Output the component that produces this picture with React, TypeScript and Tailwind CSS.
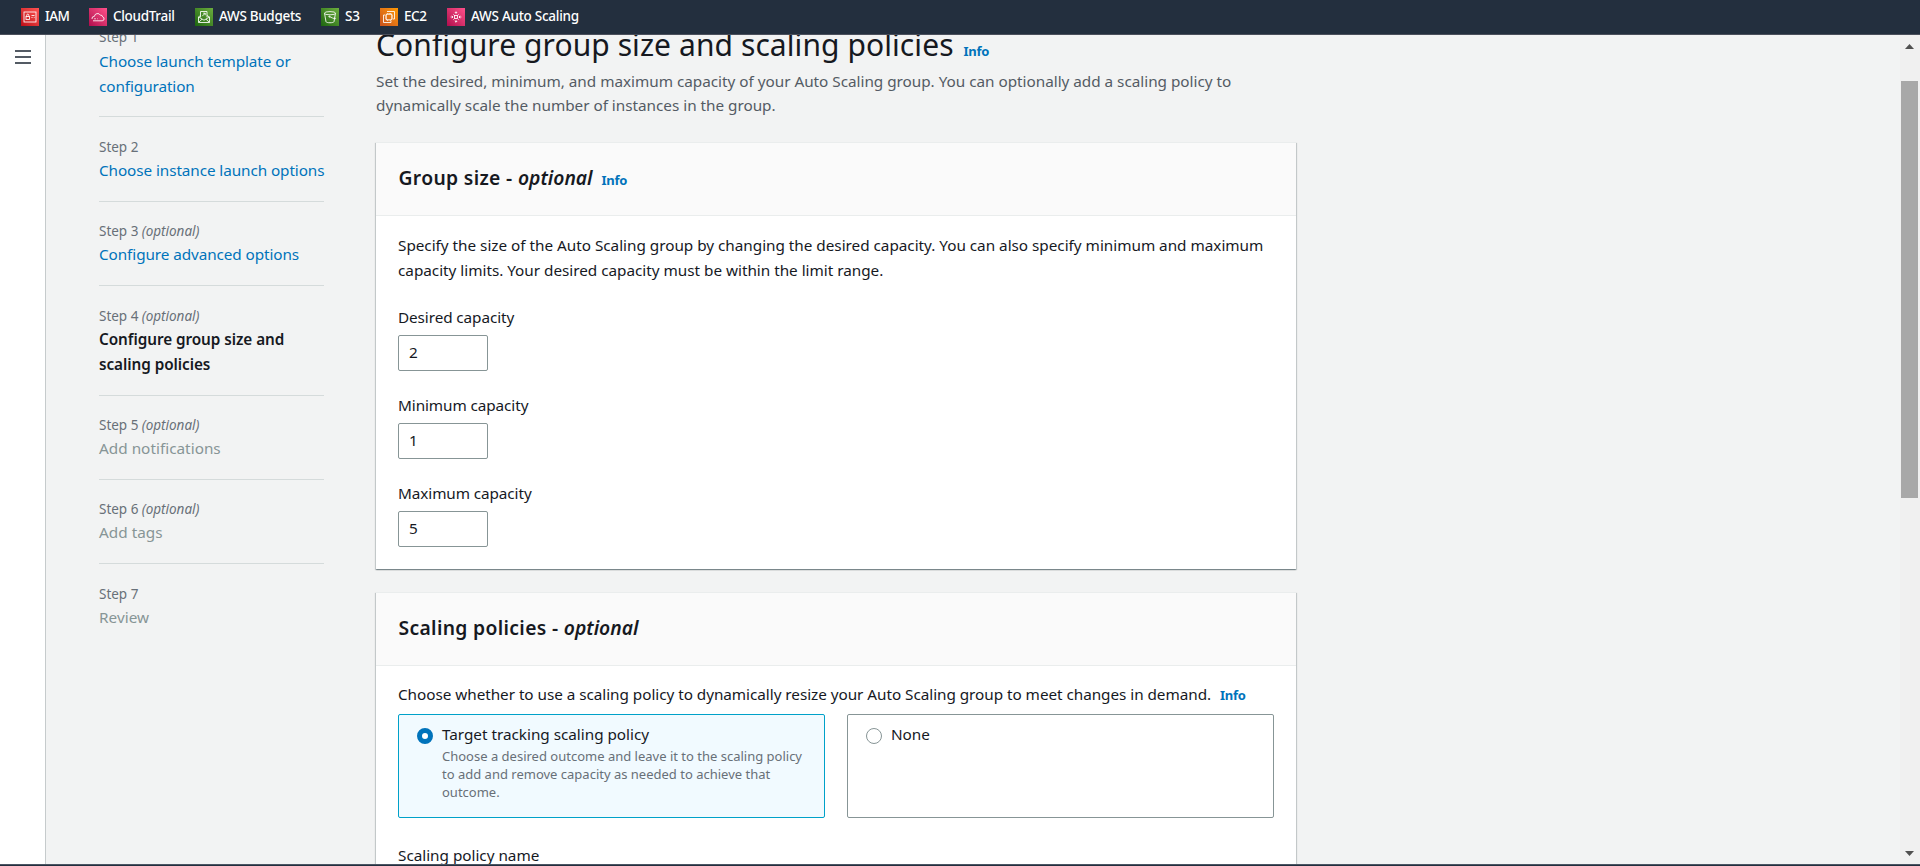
import React from 'react';

type IconName = 'iam' | 'trail' | 'budgets' | 's3' | 'ec2' | 'scaling';

const services: { icon: IconName; label: string; tile: string; box: string; text: string }[] = [
  { icon: 'iam', label: 'IAM', tile: 'from-[#bd0816] to-[#ff5252]', box: 'w-[68px]', text: 'tracking-[-0.5px]' },
  { icon: 'trail', label: 'CloudTrail', tile: 'from-[#b0084d] to-[#ff4f8b]', box: 'w-[106px]', text: 'tracking-[-0.31px]' },
  { icon: 'budgets', label: 'AWS Budgets', tile: 'from-[#1b660f] to-[#6cae3e]', box: 'w-[126px]', text: 'tracking-[-0.31px]' },
  { icon: 's3', label: 'S3', tile: 'from-[#1b660f] to-[#6cae3e]', box: 'w-[59px]', text: 'tracking-[-0.3px]' },
  { icon: 'ec2', label: 'EC2', tile: 'from-[#c8511b] to-[#ff9900]', box: 'w-[67px]', text: 'tracking-[-0.4px]' },
  { icon: 'scaling', label: 'AWS Auto Scaling', tile: 'from-[#b0084d] to-[#ff4f8b]', box: 'w-[140px]', text: 'tracking-[-0.26px]' },
];

const glyphs: Record<IconName, React.ReactNode> = {
  iam: (
    <>
      <rect x="3" y="4" width="12" height="10" />
      <rect x="5" y="8.5" width="3.5" height="3" />
      <path d="M5.7 8.5V7.2a1.05 1.05 0 0 1 2.1 0v1.3M10.5 7.5h3M10.5 9.5h1M12.8 9.5h.7" />
    </>
  ),
  trail: (
    <path d="M4 12.8h9.2a2 2 0 0 0 .5-3.9 2 2 0 0 0-2.3-1.7 3.2 3.2 0 0 0-6 1.2A2.3 2.3 0 0 0 3 11M5.2 10.8h1.6M8 10.8h.6" />
  ),
  budgets: (
    <path d="M5.5 9.3V3.5h6.5v5.8M5.5 7.5 3.5 9v5.5h11V9L12 7.5M3.5 9 9 12.2 14.5 9M3.8 14.2 7 11.2M14.2 14.2 11 11.2M7.2 8.2l3-3M8.2 5.2h2v2" />
  ),
  s3: (
    <>
      <ellipse cx="9" cy="5.2" rx="5.5" ry="1.6" />
      <path d="M3.5 5.2 5 13.7c.3 1.4 7.7 1.4 8 0l1.5-8.5M8.5 8.6c1.5.9 4.3 2 5.8 2.2.7-.2 0-.9-.6-1.3" />
      <circle cx="8.4" cy="8.6" r=".6" />
    </>
  ),
  ec2: (
    <>
      <path d="M7 3.5h7.5V11H13M5 7H3.5v7.5H11V13" />
      <rect x="6.2" y="6.2" width="5.6" height="5.6" />
      <path d="M7.7 5v1.2M9.2 5v1.2M10.7 5v1.2M7.7 11.8V13M10.3 11.8V13M5 8h1.2M5 10h1.2M11.8 8H13M11.8 10H13" />
    </>
  ),
  scaling: (
    <>
      <rect x="7.5" y="7.5" width="3" height="3" />
      <path d="M9 3.8v2M9 12.2v2M7.8 5 9 3.8 10.2 5M7.8 13 9 14.2l1.2-1.2M4.8 7.8 6 9l-1.2 1.2M13.2 7.8 12 9l1.2 1.2M3.6 9H6M12 9h2.4M6.2 6.2l.6.6M11.8 6.2l-.6.6M6.2 11.8l.6-.6M11.8 11.8l-.6-.6" />
    </>
  ),
};

function ServiceIcon({ name, tile }: { name: IconName; tile: string }) {
  return (
    <span className={`size-[18px] shrink-0 bg-linear-to-tr ${tile}`}>
      <svg viewBox="0 0 18 18" className="block size-[18px]" fill="none" stroke="#fff" strokeWidth=".85">
        {glyphs[name]}
      </svg>
    </span>
  );
}

interface Step {
  n: number;
  optional?: boolean;
  title: React.ReactNode;
  style: string;
}

const link = 'text-[#0073bb] tracking-[-0.09px]';
const pending = 'text-[#879596] tracking-[0.02px]';

const steps: Step[] = [
  { n: 1, title: <>Choose launch template or<br />configuration</>, style: link },
  { n: 2, title: 'Choose instance launch options', style: link },
  { n: 3, optional: true, title: 'Configure advanced options', style: link },
  {
    n: 4,
    optional: true,
    title: <>Configure group size and<br />scaling policies</>,
    style: 'font-semibold text-[#16191f] tracking-[-0.06px]',
  },
  { n: 5, optional: true, title: 'Add notifications', style: pending },
  { n: 6, optional: true, title: 'Add tags', style: pending },
  { n: 7, title: 'Review', style: pending },
];

function Info({ className = '' }: { className?: string }) {
  return (
    <a className={`text-[13px] font-bold tracking-[-0.3px] text-[#0073bb] ${className}`}>Info</a>
  );
}

function Card({ title, info, children }: { title: string; info?: boolean; children: React.ReactNode }) {
  return (
    <section className="border-t border-[#eaeded] bg-white shadow-[0_1px_1px_0_rgba(0,28,36,0.3),1px_1px_1px_0_rgba(0,28,36,0.15),-1px_1px_1px_0_rgba(0,28,36,0.15)]">
      <header className="h-[73px] border-b border-[#eaeded] bg-[#fafafa] px-[22.5px] pt-[21px]">
        <h2 className="text-[19.3px] leading-7 font-semibold tracking-[0.34px] text-[#16191f]">
          {title} - <i className="tracking-normal">optional</i>
          {info && <Info className="ml-[9px]" />}
        </h2>
      </header>
      <div className="px-[22px] pt-[17px]">{children}</div>
    </section>
  );
}

function Field({ label, value }: { label: string; value: string }) {
  return (
    <div className="mt-[22px]">
      <label className="block leading-6 tracking-[-0.09px]">{label}</label>
      <div className="mt-[6px] h-9 w-[90px] rounded-[2px] border border-[#879596] bg-white pl-[10px] leading-[33px]">
        {value}
      </div>
    </div>
  );
}

function Tile({ label, description, checked }: { label: string; description?: React.ReactNode; checked?: boolean }) {
  return (
    <div
      className={`flex h-[104px] w-[427px] gap-[9px] rounded-[2px] border pt-[7px] pl-[18px] ${
        checked ? 'border-[#00a1c9] bg-[#f1faff]' : 'border-[#879596] bg-white'
      }`}
    >
      <span
        className={`mt-[6px] size-4 shrink-0 rounded-full bg-white ${
          checked ? 'border-[5px] border-[#0073bb]' : 'border border-[#879596]'
        }`}
      />
      <div>
        <div className="leading-6">{label}</div>
        {description && <p className="mt-px text-[13px] leading-[18px] tracking-normal text-[#687078]">{description}</p>}
      </div>
    </div>
  );
}

export default function App() {
  return (
    <div className="flex h-[866px] w-full flex-col overflow-hidden bg-[#f2f3f3] font-['Noto_Sans','Open_Sans',sans-serif] text-[15.3px] tracking-[-0.02px] whitespace-nowrap text-[#16191f]">
      <nav className="flex h-[35px] shrink-0 border-b border-[#4b505c] bg-[#232f3e] pt-2 pl-[21px] text-[13.5px] leading-[17px] font-medium text-white">
        {services.map((s) => (
          <a key={s.label} className={`flex gap-[6px] ${s.box}`}>
            <ServiceIcon name={s.icon} tile={s.tile} />
            <span className={s.text}>{s.label}</span>
          </a>
        ))}
      </nav>

      <div className="flex min-h-0 flex-1 overflow-hidden">
        <aside className="w-[46px] shrink-0 border-r border-[#c6cbcc] bg-white pt-[15px] pl-[15px]">
          <div className="flex flex-col gap-1">
            <span className="h-[2px] w-4 bg-[#545b64]" />
            <span className="h-[2px] w-4 bg-[#545b64]" />
            <span className="h-[2px] w-4 bg-[#545b64]" />
          </div>
        </aside>

        <ol className="-mt-[27px] ml-[53px] w-[225px] shrink-0">
          {steps.map((s) => (
            <li key={s.n} className="border-b border-[#d5dbdb] pt-[20.4px] pb-[17.8px] last:border-b-0">
              <div className="text-[13.5px] leading-[18px] text-[#687078]">
                Step {s.n} {s.optional && <i>(optional)</i>}
              </div>
              <div className={`mt-[2.2px] leading-[25px] ${s.style}`}>{s.title}</div>
            </li>
          ))}
        </ol>

        <main className="-mt-[8px] ml-[52px] w-[920px] shrink-0">
          <h1 className="flex h-9 items-baseline text-[30px] leading-9 tracking-[0.08px]">
            Configure group size and scaling policies
            <Info className="ml-[10px]" />
          </h1>
          <p className="mt-[5.5px] leading-6 text-[#545b64]">
            Set the desired, minimum, and maximum capacity of your Auto Scaling group. You can optionally add a scaling policy to
            <br />
            dynamically scale the number of instances in the group.
          </p>

          <div className="mt-[25.5px] flex flex-col gap-[23px]">
            <Card title="Group size" info>
              <p className="leading-[25px]">
                Specify the size of the Auto Scaling group by changing the desired capacity. You can also specify minimum and maximum
                <br />
                capacity limits. Your desired capacity must be within the limit range.
              </p>
              <Field label="Desired capacity" value="2" />
              <Field label="Minimum capacity" value="1" />
              <Field label="Maximum capacity" value="5" />
              <div className="h-[22px]" />
            </Card>

            <Card title="Scaling policies">
              <div className="-mt-px leading-6 tracking-[-0.045px]">
                Choose whether to use a scaling policy to dynamically resize your Auto Scaling group to meet changes in demand.
                <Info className="ml-[9px]" />
              </div>
              <div className="mt-[7px] flex gap-[22px]">
                <Tile
                  checked
                  label="Target tracking scaling policy"
                  description={
                    <>
                      Choose a desired outcome and leave it to the scaling policy
                      <br />
                      to add and remove capacity as needed to achieve that
                      <br />
                      outcome.
                    </>
                  }
                />
                <Tile label="None" />
              </div>
              <div className="mt-[25px] pb-6 leading-6">Scaling policy name</div>
            </Card>
          </div>
        </main>

        <div className="ml-auto flex w-5 shrink-0 flex-col items-center bg-[#f0f0f0] pr-px">
          <svg viewBox="0 0 9 5" className="mt-[9px] h-[5px] w-[9px] shrink-0 fill-[#505050]">
            <path d="M0 5 4.5 0 9 5z" />
          </svg>
          <div className="mt-8 h-[417px] w-[17px] bg-[#a8a8a8]" />
          <svg viewBox="0 0 9 5" className="mt-auto mb-[8px] h-[5px] w-[9px] shrink-0 fill-[#505050]">
            <path d="M0 0 4.5 5 9 0z" />
          </svg>
        </div>
      </div>
      <footer className="h-[2px] shrink-0 border-t border-[#4b5563] bg-[#232f3e]" />
    </div>
  );
}
